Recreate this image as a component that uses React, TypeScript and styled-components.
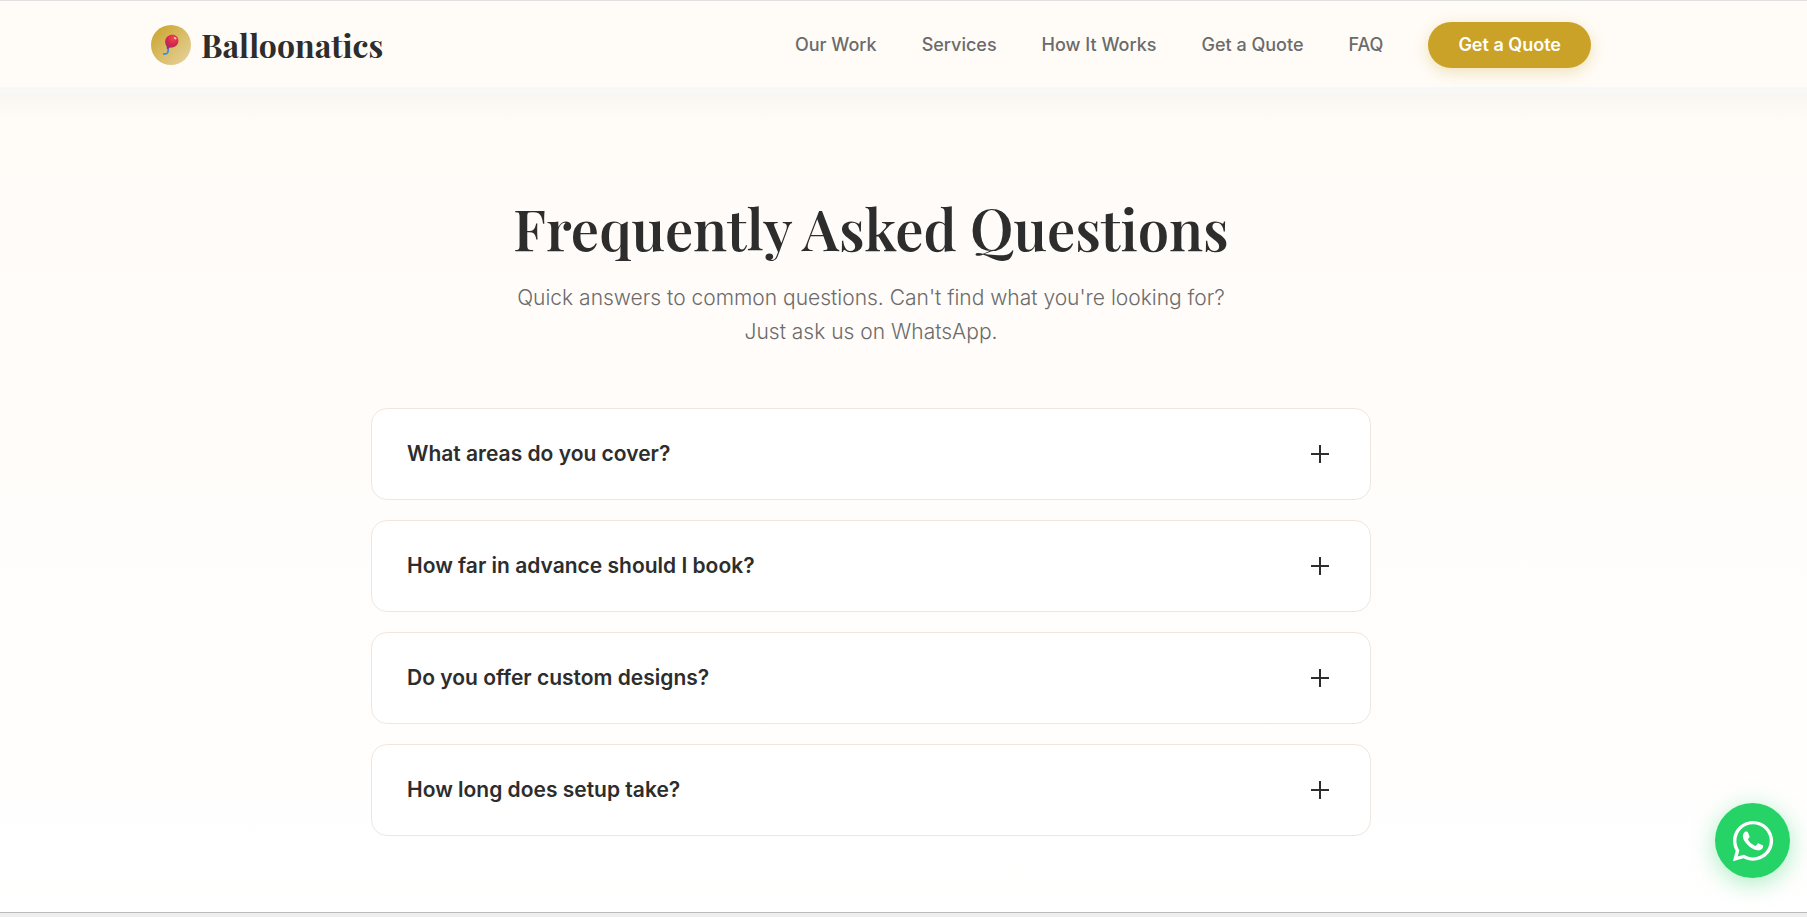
import React, { useState } from "react";
import styled, { createGlobalStyle } from "styled-components";
import { FaWhatsapp } from "react-icons/fa";

const GlobalStyle = createGlobalStyle`
  *, *::before, *::after { box-sizing: border-box; }
  html { background: #eeeeee; }
  body {
    margin: 0;
    background: #eeeeee;
    color: #2d2d2d;
    font-family: Inter, "Liberation Sans", sans-serif;
  }
`;

const serif = `"Playfair Display", "Liberation Serif", serif`;

const Page = styled.div`
  min-height: calc(100vh - 4px);
  display: flex;
  flex-direction: column;
  border-top: 1px solid #e0e0e0;
  border-bottom: 1px solid #bbbbbb;
`;

const Header = styled.header`
  height: 93px;
  border-bottom: 7px solid #f8f8f9;
  padding: 0 65px 0 0;
  background: #fffcf7;
`;

const HeaderInner = styled.div`
  max-width: 1440px;
  height: 100%;
  margin: 0 auto;
  padding-top: 2px;
  display: flex;
  align-items: center;
  justify-content: space-between;
`;

const Brand = styled.a`
  display: flex;
  align-items: center;
  gap: 10px;
  color: #2d2d2d;
  text-decoration: none;
  font: 700 32px/44px ${serif};
`;

const BrandMark = styled.span`
  width: 40px;
  height: 40px;
  border-radius: 50%;
  display: grid;
  place-items: center;
  background: linear-gradient(135deg, #c9a227, #e8d5a3);
`;

const Nav = styled.nav`
  display: flex;
  align-items: center;
  gap: 45px;
`;

const NavLink = styled.a`
  color: #6b6b6b;
  text-decoration: none;
  font-size: 18px;
  font-weight: 500;
  line-height: 28px;
`;

const Cta = styled.button`
  height: 46px;
  padding: 0 30px;
  border: 0;
  border-radius: 23px;
  background: #c9a227;
  color: #ffffff;
  font: 600 18px/28px Inter, "Liberation Sans", sans-serif;
  box-shadow: 0 4px 15px rgba(201, 162, 39, 0.3);
  cursor: pointer;
`;

const Section = styled.main`
  flex: 1;
  padding: 98px 65px 76px 0;
  background:
    linear-gradient(180deg, rgba(0, 0, 0, 0.024), rgba(0, 0, 0, 0)) top / 100% 28px no-repeat,
    linear-gradient(180deg, #fffbf7 0%, #ffffff 100%);
`;

const Intro = styled.div`
  max-width: 800px;
  margin: 0 auto 59px;
  text-align: center;
`;

const Title = styled.h1`
  margin: 0 0 17px;
  font: 600 56px/72px ${serif};
`;

const Subtitle = styled.p`
  max-width: 730px;
  margin: 0 auto;
  color: #6b6b6b;
  font-size: 21px;
  font-weight: 300;
  line-height: 34px;
`;

const FaqList = styled.div`
  max-width: 1000px;
  margin: 0 auto;
  display: flex;
  flex-direction: column;
  gap: 20px;
`;

const FaqCard = styled.article`
  border: 1px solid #f0e6e0;
  border-radius: 16px;
  background: #ffffff;
`;

const FaqHeading = styled.h2`
  margin: 0;
`;

const FaqButton = styled.button`
  width: 100%;
  min-height: 90px;
  padding: 0 36px 0 35px;
  border: 0;
  border-radius: 16px;
  background: transparent;
  color: #2d2d2d;
  display: flex;
  align-items: center;
  justify-content: space-between;
  text-align: left;
  font: 600 21px/32px Inter, "Liberation Sans", sans-serif;
  cursor: pointer;
`;

const PlusIcon = styled.svg`
  width: 28px;
  height: 28px;
  flex: none;
`;

const WhatsAppLink = styled.a`
  position: fixed;
  right: 17px;
  bottom: 39px;
  width: 75px;
  height: 75px;
  border-radius: 50%;
  display: grid;
  place-items: center;
  background: #25d366;
  color: #ffffff;
  box-shadow: 0 5px 25px rgba(37, 211, 102, 0.4);
`;

function Balloon() {
  return (
    <svg width="16" height="22" viewBox="0 0 16 22" aria-hidden="true">
      <defs>
        <radialGradient id="balloonSkin" cx="0.6" cy="0.25" r="0.85">
          <stop offset="0" stopColor="#f2454f" />
          <stop offset="0.5" stopColor="#d72747" />
          <stop offset="1" stopColor="#8d2790" />
        </radialGradient>
      </defs>
      <path d="M5 14.5 C5.4 16.6 5 18.6 4 19.4 C3.2 20 2 19.8 0.9 20" fill="none" stroke="#2f8ff0" strokeWidth="1.8" strokeLinecap="round" />
      <path d="M9.3 0.8 C13 0.8 15.4 3.4 15.4 6.8 C15.4 10.8 12.4 13.2 9 13.4 L6 13.8 L5.4 15.2 L3.4 14.2 L4 12.8 C2.8 11.4 2 9.4 2.2 7 C2.5 3.4 5.6 0.8 9.3 0.8 Z" fill="url(#balloonSkin)" />
      <ellipse cx="12.2" cy="4.2" rx="1.5" ry="1" fill="#ffc9cc" transform="rotate(35 12.2 4.2)" />
    </svg>
  );
}

const links = [
  { label: "Our Work", href: "#work" },
  { label: "Services", href: "#services" },
  { label: "How It Works", href: "#process" },
  { label: "Get a Quote", href: "#quote" },
  { label: "FAQ", href: "#faq" },
];

const questions = [
  "What areas do you cover?",
  "How far in advance should I book?",
  "Do you offer custom designs?",
  "How long does setup take?",
];

function FaqItem({ question }: { question: string }) {
  const [active, setActive] = useState(false);
  return (
    <FaqCard>
      <FaqHeading>
        <FaqButton type="button" aria-expanded={active} onClick={() => setActive(!active)}>
          {question}
          <PlusIcon viewBox="0 0 28 28" aria-hidden="true">
            <path d={active ? "M5 14h18" : "M5 14h18M14 5v18"} stroke="#2d2d2d" strokeWidth="2" />
          </PlusIcon>
        </FaqButton>
      </FaqHeading>
    </FaqCard>
  );
}

export default function App() {
  return (
    <>
      <GlobalStyle />
      <Page>
        <Header>
          <HeaderInner>
            <Brand href="#home">
              <BrandMark>
                <Balloon />
              </BrandMark>
              Balloonatics
            </Brand>
            <Nav>
              {links.map((link) => (
                <NavLink key={link.label} href={link.href}>
                  {link.label}
                </NavLink>
              ))}
              <Cta type="button">Get a Quote</Cta>
            </Nav>
          </HeaderInner>
        </Header>
        <Section id="faq">
          <Intro>
            <Title>Frequently Asked Questions</Title>
            <Subtitle>
              Quick answers to common questions. Can't find what you're looking for? Just ask us on WhatsApp.
            </Subtitle>
          </Intro>
          <FaqList>
            {questions.map((question) => (
              <FaqItem key={question} question={question} />
            ))}
          </FaqList>
        </Section>
      </Page>
      <WhatsAppLink href="#whatsapp" aria-label="Chat on WhatsApp">
        <FaWhatsapp size={46} />
      </WhatsAppLink>
    </>
  );
}
